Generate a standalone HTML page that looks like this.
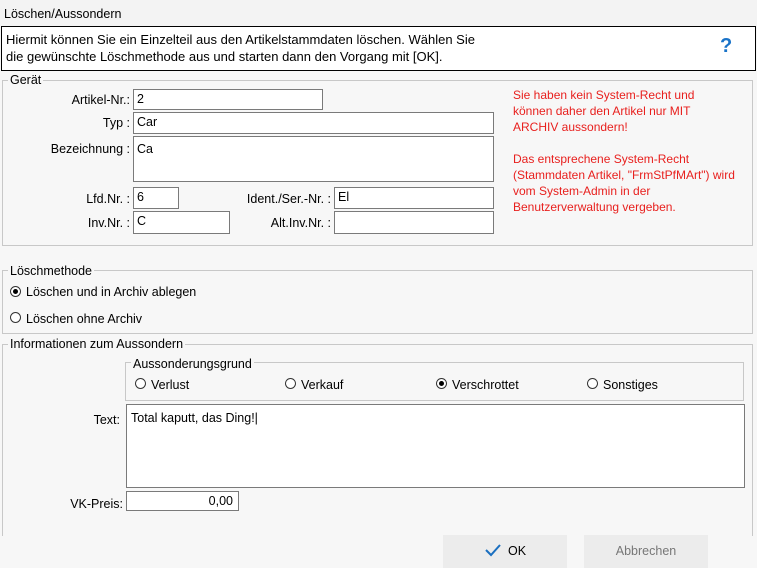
<!DOCTYPE html><html><head><meta charset="utf-8"><style>
*{box-sizing:border-box}
body{margin:0;width:757px;height:568px;background:#f7f7f7;font-family:"Liberation Sans",sans-serif;font-size:12.5px;color:#000;position:relative;overflow:hidden}
.a{position:absolute;white-space:nowrap}
.in{position:absolute;background:#fff;border:1px solid #7a7a7a;padding:2px 3px;font-size:12.5px}
.gb{position:absolute;border:1px solid #c8c8c8}
.lg{position:absolute;background:#f7f7f7;padding:0 2px;font-size:12.5px}
.r{text-align:right}
.rad{position:absolute;width:11px;height:11px;border:1px solid #333;border-radius:50%;background:#fff}
.rad.on::after{content:"";position:absolute;left:2px;top:2px;width:5px;height:5px;border-radius:50%;background:#000}
.btn{position:absolute;background:#ececec;font-size:12.5px;text-align:center}
</style></head><body>
<div class="a" style="left:0;top:0;width:757px;height:26px;background:#f3f3f3"></div>
<div class="a" style="left:4px;top:7px">Löschen/Aussondern</div>
<div class="a" style="left:1px;top:26px;width:755px;height:45px;background:#fff;border:1px solid #000"></div>
<div class="a" style="left:6px;top:31px;line-height:17px;font-size:13px">Hiermit können Sie ein Einzelteil aus den Artikelstammdaten löschen. Wählen Sie<br>die gewünschte Löschmethode aus und starten dann den Vorgang mit [OK].</div>
<div class="a" style="left:720px;top:35px;color:#1a73c8;font-weight:bold;font-size:20px">?</div>

<div class="gb" style="left:2px;top:80px;width:751px;height:166px"></div>
<div class="lg" style="left:8px;top:73px">Gerät</div>
<div class="a r" style="left:40px;top:93px;width:90px">Artikel-Nr.:</div>
<div class="in" style="left:133px;top:89px;width:190px;height:21px">2&nbsp;&nbsp;</div>
<div class="a r" style="left:40px;top:116px;width:90px">Typ :</div>
<div class="in" style="left:133px;top:112px;width:361px;height:22px">Car</div>
<div class="a r" style="left:40px;top:142px;width:90px">Bezeichnung :</div>
<div class="in" style="left:133px;top:136px;width:361px;height:46px;padding-top:5px">Ca</div>
<div class="a r" style="left:40px;top:192px;width:90px">Lfd.Nr. :</div>
<div class="in" style="left:133px;top:187px;width:46px;height:22px">6</div>
<div class="a r" style="left:200px;top:192px;width:131px">Ident./Ser.-Nr. :</div>
<div class="in" style="left:334px;top:187px;width:160px;height:22px">El</div>
<div class="a r" style="left:40px;top:216px;width:90px">Inv.Nr. :</div>
<div class="in" style="left:133px;top:211px;width:97px;height:23px">C</div>
<div class="a r" style="left:200px;top:216px;width:131px">Alt.Inv.Nr. :</div>
<div class="in" style="left:334px;top:211px;width:160px;height:23px"></div>
<div class="a" style="left:513px;top:87px;color:#e8201e;line-height:16px;font-size:12px">Sie haben kein System-Recht und<br>können daher den Artikel nur MIT<br>ARCHIV aussondern!<br><br>Das entsprechene System-Recht<br>(Stammdaten Artikel, "FrmStPfMArt") wird<br>vom System-Admin in der<br>Benutzerverwaltung vergeben.</div>

<div class="gb" style="left:2px;top:270px;width:751px;height:64px"></div>
<div class="lg" style="left:8px;top:264px">Löschmethode</div>
<div class="rad on" style="left:10px;top:286px"></div><div class="a" style="left:26px;top:285px">Löschen und in Archiv ablegen</div>
<div class="rad" style="left:10px;top:312px"></div><div class="a" style="left:26px;top:312px">Löschen ohne Archiv</div>

<div class="gb" style="left:2px;top:344px;width:751px;height:192px;border-bottom:none"></div>
<div class="lg" style="left:8px;top:337px">Informationen zum Aussondern</div>
<div class="gb" style="left:125px;top:362px;width:619px;height:39px"></div>
<div class="lg" style="left:131px;top:357px">Aussonderungsgrund</div>
<div class="rad" style="left:135px;top:378px"></div><div class="a" style="left:151px;top:378px">Verlust</div>
<div class="rad" style="left:285px;top:378px"></div><div class="a" style="left:301px;top:378px">Verkauf</div>
<div class="rad on" style="left:436px;top:378px"></div><div class="a" style="left:452px;top:378px">Verschrottet</div>
<div class="rad" style="left:587px;top:378px"></div><div class="a" style="left:603px;top:378px">Sonstiges</div>
<div class="a r" style="left:40px;top:413px;width:80px">Text:</div>
<div class="in" style="left:126px;top:404px;width:619px;height:84px;padding:6px 4px">Total kaputt, das Ding!|</div>
<div class="a r" style="left:40px;top:497px;width:83px">VK-Preis:</div>
<div class="in r" style="left:126px;top:491px;width:113px;height:20px;padding:2px 5px">0,00</div>

<div class="btn" style="left:443px;top:535px;width:124px;height:33px;line-height:33px"><svg width="18" height="14" viewBox="0 0 18 14" style="vertical-align:-2px;margin-right:6px"><path d="M2 7 L7 12 L16 2" stroke="#1a6fc0" stroke-width="2" fill="none"/></svg>OK</div>
<div class="btn" style="left:584px;top:535px;width:124px;height:33px;line-height:33px;color:#777">Abbrechen</div>
</body></html>
